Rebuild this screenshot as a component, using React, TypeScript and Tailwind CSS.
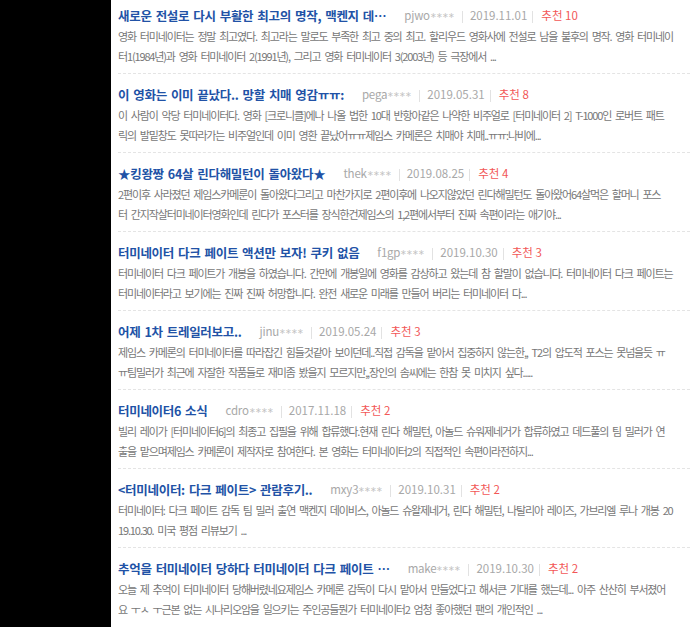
import React from 'react';

type Review = {
    title: string;
    user: string;
    date: string;
    likes: number;
    lines: [string, string];
};

const reviews: Review[] = [
    {
        title: '새로운 전설로 다시 부활한 최고의 명작, 맥켄지 데…',
        user: 'pjwo',
        date: '2019.11.01',
        likes: 10,
        lines: [
            '영화 터미네이터는 정말 최고였다. 최고라는 말로도 부족한 최고 중의 최고. 할리우드 영화사에 전설로 남을 불후의 명작. 영화 터미네이',
            '터1(1984년)과 영화 터미네이터 2(1991년), 그리고 영화 터미네이터 3(2003년) 등 극장에서 ...',
        ],
    },
    {
        title: '이 영화는 이미 끝났다.. 망할 치매 영감ㅠㅠ:',
        user: 'pega',
        date: '2019.05.31',
        likes: 8,
        lines: [
            '이 사람이 악당 터미네이터다. 영화 [크로니클]에나 나올 법한 10대 반항아같은 나약한 비주얼로 [터미네이터 2] T-1000인 로버트 패트',
            '릭의 발밑창도 못따라가는 비주얼인데 이미 영환 끝났어ㅠㅠ제임스 카메론은 치매야 치매..ㅠㅠ:나비에...',
        ],
    },
    {
        title: '★킹왕짱 64살 린다해밀턴이 돌아왔다★',
        user: 'thek',
        date: '2019.08.25',
        likes: 4,
        lines: [
            '2편이후 사라졌던 제임스카메룬이 돌아왔다그리고 마찬가지로 2편이후에 나오지않았던 린다해밀턴도 돌아왔어64살먹은 할머니 포스',
            '터 간지작살터미네이터영화인데 린다가 포스터를 장식한건제임스의 1,2편에서부터 진짜 속편이라는 애기야...',
        ],
    },
    {
        title: '터미네이터 다크 페이트 액션만 보자! 쿠키 없음',
        user: 'f1gp',
        date: '2019.10.30',
        likes: 3,
        lines: [
            '터미네이터 다크 페이트가 개봉을 하였습니다. 간만에 개봉일에 영화를 감상하고 왔는데 참 할말이 없습니다. 터미네이터 다크 페이트는',
            '터미네이터라고 보기에는 진짜 진짜 허망합니다. 완전 새로운 미래를 만들어 버리는 터미네이터 다...',
        ],
    },
    {
        title: '어제 1차 트레일러보고..',
        user: 'jinu',
        date: '2019.05.24',
        likes: 3,
        lines: [
            '제임스 카메론의 터미네이터를 따라잡긴 힘들것같아 보이던데..직접 감독을 맡아서 집중하지 않는한,, T2의 압도적 포스는 못넘을듯 ㅠ',
            'ㅠ팀밀러가 최근에 자잘한 작품들로 재미좀 봤을지 모르지만,,장인의 솜씨에는 한참 못 미치지 싶다.....',
        ],
    },
    {
        title: '터미네이터6 소식',
        user: 'cdro',
        date: '2017.11.18',
        likes: 2,
        lines: [
            '빌리 레이가 [터미네이터6]의 최종고 집필을 위해 합류했다.현재 린다 해밀턴, 아놀드 슈워제네거가 합류하였고 데드풀의 팀 밀러가 연',
            '출을 맡으며제임스 카메론이 제작자로 참여한다. 본 영화는 터미네이터2의 직접적인 속편이라전하지...',
        ],
    },
    {
        title: '<터미네이터: 다크 페이트> 관람후기..',
        user: 'mxy3',
        date: '2019.10.31',
        likes: 2,
        lines: [
            '터미네이터: 다크 페이트 감독 팀 밀러 출연 맥켄지 데이비스, 아놀드 슈왈제네거, 린다 해밀턴, 나탈리아 레이즈, 가브리엘 루나 개봉 20',
            '19.10.30. 미국 평점 리뷰보기 ...',
        ],
    },
    {
        title: '추억을 터미네이터 당하다 터미네이터 다크 페이트 …',
        user: 'make',
        date: '2019.10.30',
        likes: 2,
        lines: [
            '오늘 제 추억이 터미네이터 당해버렸네요제임스 카메론 감독이 다시 맡아서 만들었다고 해서큰 기대를 했는데... 아주 산산히 부서졌어',
            '요 ㅜㅅ ㅜ근본 없는 시나리오암을 일으키는 주인공들뭔가 터미네이터2 엄청 좋아했던 팬의 개인적인 ...',
        ],
    },
];

const Divider = () => <span className="inline-block w-px h-[12px] bg-[#e2e2e2]" />;

const ReviewItem: React.FC<{ review: Review }> = ({ review }) => (
    <li className="border-b border-dashed border-[#e4e4e4] pt-[11px] pb-[7px] first:pt-[6px] last:border-b-0">
        <div className="flex items-center h-[20px] whitespace-nowrap">
            <span className="font-bold text-[12.5px] leading-[20px] text-[#2152a6] tracking-[-0.3px] [word-spacing:1.5px]">
                {review.title}
            </span>
            <span className="ml-[18px] text-[11.5px] text-[#a8a8a8] tracking-[-0.2px]">
                {review.user}
                <span className="relative top-[-2px] text-[8px] tracking-[-1px] text-[#c4c4c4]">∗∗∗∗</span>
            </span>
            <span className="ml-[8px]"><Divider /></span>
            <span className="ml-[7px] text-[11.5px] text-[#a8a8a8]">{review.date}</span>
            <span className="ml-[5px]"><Divider /></span>
            <span className="ml-[8px] text-[11.5px] text-[#f25757]">추천 {review.likes}</span>
        </div>
        <div className="text-[11px] leading-[20px] text-[#777] tracking-[-1.15px] [word-spacing:2.5px]">
            {review.lines.map((line, i) => (
                <p key={i} className="whitespace-nowrap overflow-hidden">{line}</p>
            ))}
        </div>
    </li>
);

const App: React.FC = () => {
    return (
        <div className="flex min-h-screen bg-white font-['Noto_Sans_CJK_KR',sans-serif]">
            <div className="w-[111px] shrink-0 bg-black" />
            <ul className="flex-1 min-w-0 pl-[7px] pr-[10px]">
                {reviews.map(r => (
                    <ReviewItem key={r.user + r.date} review={r} />
                ))}
            </ul>
        </div>
    );
};

export default App;
